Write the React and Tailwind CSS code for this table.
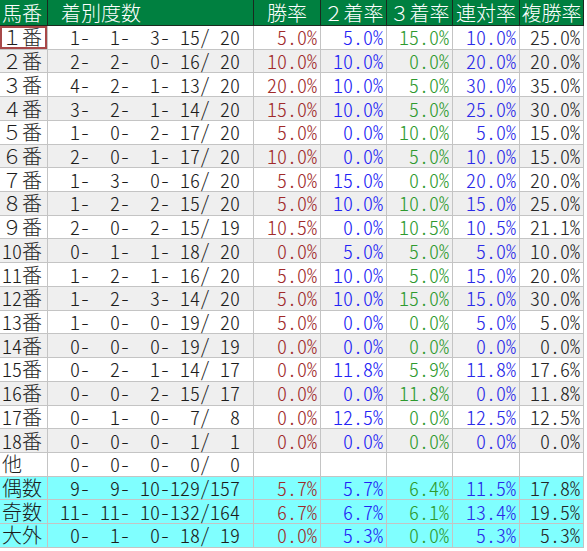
import React from "react";

const pad = (n, w) => String(n).padStart(w, " ");
const fmt = (a, b, c, d, e) =>
  `${pad(a, 2)}- ${pad(b, 2)}- ${pad(c, 2)}-${pad(d, 3)}/${pad(e, 3)}`;

const data = [
  ["１番", [1, 1, 3, 15, 20], ["5.0%", "5.0%", "15.0%", "10.0%", "25.0%"]],
  ["２番", [2, 2, 0, 16, 20], ["10.0%", "10.0%", "0.0%", "20.0%", "20.0%"]],
  ["３番", [4, 2, 1, 13, 20], ["20.0%", "10.0%", "5.0%", "30.0%", "35.0%"]],
  ["４番", [3, 2, 1, 14, 20], ["15.0%", "10.0%", "5.0%", "25.0%", "30.0%"]],
  ["５番", [1, 0, 2, 17, 20], ["5.0%", "0.0%", "10.0%", "5.0%", "15.0%"]],
  ["６番", [2, 0, 1, 17, 20], ["10.0%", "0.0%", "5.0%", "10.0%", "15.0%"]],
  ["７番", [1, 3, 0, 16, 20], ["5.0%", "15.0%", "0.0%", "20.0%", "20.0%"]],
  ["８番", [1, 2, 2, 15, 20], ["5.0%", "10.0%", "10.0%", "15.0%", "25.0%"]],
  ["９番", [2, 0, 2, 15, 19], ["10.5%", "0.0%", "10.5%", "10.5%", "21.1%"]],
  ["10番", [0, 1, 1, 18, 20], ["0.0%", "5.0%", "5.0%", "5.0%", "10.0%"]],
  ["11番", [1, 2, 1, 16, 20], ["5.0%", "10.0%", "5.0%", "15.0%", "20.0%"]],
  ["12番", [1, 2, 3, 14, 20], ["5.0%", "10.0%", "15.0%", "15.0%", "30.0%"]],
  ["13番", [1, 0, 0, 19, 20], ["5.0%", "0.0%", "0.0%", "5.0%", "5.0%"]],
  ["14番", [0, 0, 0, 19, 19], ["0.0%", "0.0%", "0.0%", "0.0%", "0.0%"]],
  ["15番", [0, 2, 1, 14, 17], ["0.0%", "11.8%", "5.9%", "11.8%", "17.6%"]],
  ["16番", [0, 0, 2, 15, 17], ["0.0%", "0.0%", "11.8%", "0.0%", "11.8%"]],
  ["17番", [0, 1, 0, 7, 8], ["0.0%", "12.5%", "0.0%", "12.5%", "12.5%"]],
  ["18番", [0, 0, 0, 1, 1], ["0.0%", "0.0%", "0.0%", "0.0%", "0.0%"]],
  ["他", [0, 0, 0, 0, 0], ["", "", "", "", ""]],
  ["偶数", [9, 9, 10, 129, 157], ["5.7%", "5.7%", "6.4%", "11.5%", "17.8%"], true],
  ["奇数", [11, 11, 10, 132, 164], ["6.7%", "6.7%", "6.1%", "13.4%", "19.5%"], true],
  ["大外", [0, 1, 0, 18, 19], ["0.0%", "5.3%", "0.0%", "5.3%", "5.3%"], true],
];

const widths = ["w-[67px]", "w-[66px]", "w-[66px]", "w-[67px]", "w-[64px]"];
const colors = [
  "text-[#a02a2a]",
  "text-[#2222f5]",
  "text-[#2e9a2e]",
  "text-[#2a2ae8]",
  "text-[#262626]",
];
const headers = ["勝率", "２着率", "３着率", "連対率", "複勝率"];

export default function App() {
  return (
    <div className="w-[587px] h-[551px] bg-white font-['Noto_Sans_CJK_JP',sans-serif] font-light text-[20px] leading-none text-[#1c1c1c]">
      <div className="flex h-[26px] w-[584px] border-b border-[#1a2a1f] bg-[#008040] text-white">
        <div className="w-[48px] shrink-0 flex items-center pl-[2px] border-r border-[#1a2a1f]">
          馬番
        </div>
        <div className="w-[206px] shrink-0 flex items-center pl-[13px] border-r border-[#1a2a1f]">
          着別度数
        </div>
        {headers.map((h, i) => (
          <div
            key={h}
            className={`${widths[i]} shrink-0 flex items-center justify-center border-r border-[#1a2a1f]`}
          >
            {h}
          </div>
        ))}
      </div>
      {data.map(([name, c, p, cyan], r) => {
        const bg = cyan ? "bg-[#80ffff]" : r % 2 === 1 ? "bg-[#efefef]" : "bg-white";
        const ascii = /^[0-9]/.test(name);
        return (
          <div
            key={name}
            className={`flex h-[23.73px] w-[584px] border-b border-[#c4c4c4] ${bg}`}
          >
            <div
              className={`w-[48px] shrink-0 flex items-center pl-[2px] border-r border-[#c4c4c4] ${
                ascii ? "[font-feature-settings:'hwid']" : ""
              } ${r === 0 ? "shadow-[inset_0_0_0_2px_#a84848]" : ""}`}
            >
              {name}
            </div>
            <div className="w-[206px] shrink-0 flex items-center justify-end pr-[13px] border-r border-[#c4c4c4] whitespace-pre [font-feature-settings:'hwid']">
              {fmt(...c)}
            </div>
            {p.map((v, i) => (
              <div
                key={i}
                className={`${widths[i]} ${colors[i]} shrink-0 flex items-center justify-end pr-[3px] border-r border-[#c4c4c4] whitespace-pre [font-feature-settings:'hwid']`}
              >
                {v}
              </div>
            ))}
          </div>
        );
      })}
    </div>
  );
}
